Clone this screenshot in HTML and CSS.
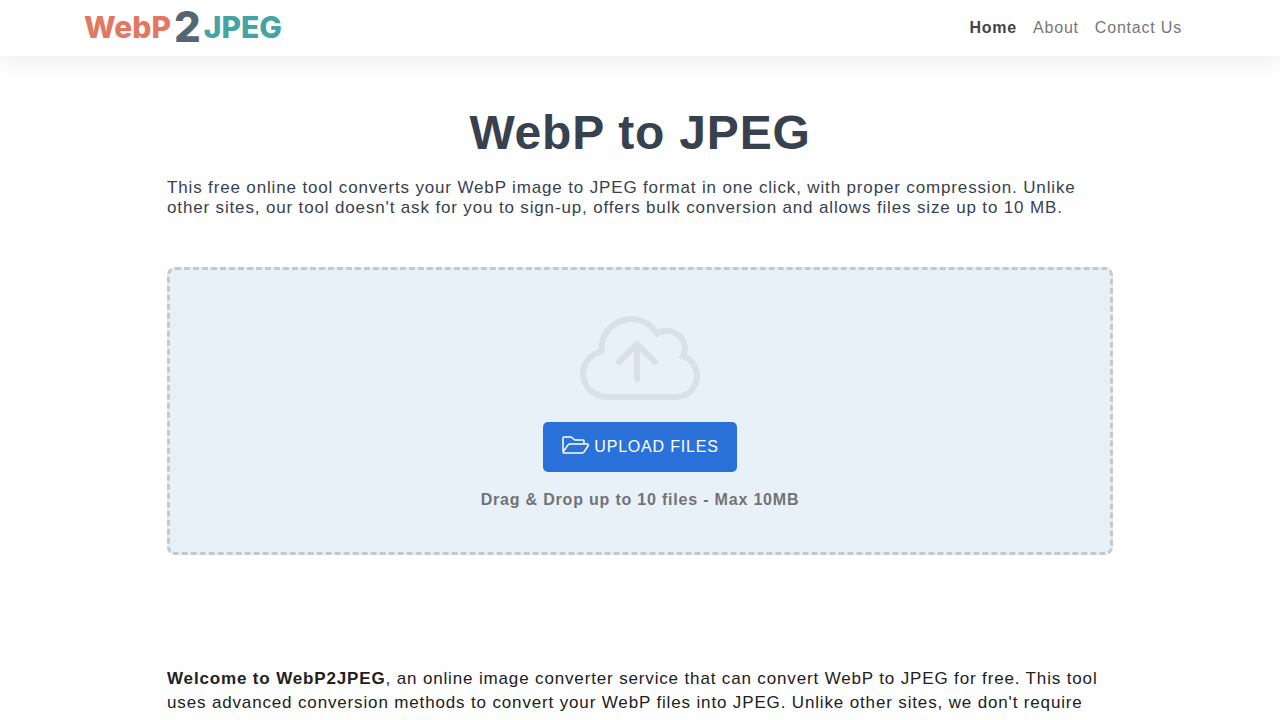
FILE: index.html
```
<!DOCTYPE html>
<html lang="en">
<head>
    <meta charset="UTF-8">
    <meta name="viewport" content="width=device-width, initial-scale=1.0">
    <title>WebP to JPEG</title>
    <link rel="stylesheet" href="styles.css">
</head>
<body>
    <header class="navbar">
        <div class="nav-container">
            <a class="logo" href="#"><span class="logo-webp">WebP</span><span class="logo-two">2</span><span class="logo-jpeg">JPEG</span></a>
            <nav class="nav-links">
                <a class="active" href="#">Home</a>
                <a href="#">About</a>
                <a href="#">Contact Us</a>
            </nav>
        </div>
    </header>

    <main class="container">
        <h1>WebP to JPEG</h1>
        <p class="lead">This free online tool converts your WebP image to JPEG format in one click, with proper compression. Unlike other sites, our tool doesn't ask for you to sign-up, offers bulk conversion and allows files size up to 10 MB.</p>

        <div class="dropzone">
            <svg class="cloud" viewBox="0 0 120 84" aria-hidden="true">
                <path d="M27 81A24 24 0 0 1 3 57A24 23 0 0 1 21.500 35.500A30 30 0 0 1 77 17.500A18.500 18.500 0 0 1 105 33Q105 37 103 40A21.500 21.500 0 0 1 117 60A21 21 0 0 1 96 81Z"/>
                <path class="arrow" d="M57 63V28M39 46L57 28L75 46"/>
            </svg>
            <button type="button" class="upload">
                <svg class="folder" viewBox="0 0 27 18" aria-hidden="true">
                    <path d="M1 16V2Q1 1 2 1H9L13 4H21Q22 4 22 5V8M1 16L6 9Q7 8 8 8H25Q27 8 26 10L22 16Q21 17 20 17H2Q1 17 1 16"/>
                </svg>
                <span>UPLOAD FILES</span>
            </button>
            <p class="hint">Drag &amp; Drop up to 10 files - Max 10MB</p>
        </div>

        <p class="about"><strong>Welcome to WebP2JPEG</strong>, an online image converter service that can convert WebP to JPEG for free. This tool uses advanced conversion methods to convert your WebP files into JPEG. Unlike other sites, we don't require</p>
    </main>
</body>
</html>
```

FILE: styles.css
```
* {
    box-sizing: border-box;
}
body {
    margin: 0;
    font-family: "Liberation Sans", Arial, sans-serif;
    font-size: 16px;
    line-height: 24px;
    letter-spacing: 0.05em;
    color: #212121;
    background-color: #fefefe;
}
.navbar {
    background-color: #fff;
    box-shadow: 0 8px 16px rgba(0, 0, 0, 0.05);
}
.nav-container {
    display: flex;
    align-items: center;
    justify-content: space-between;
    max-width: 1112px;
    height: 56px;
    margin: 0 auto;
    padding: 0 14px 0 0;
}
.logo {
    display: flex;
    align-items: center;
    padding-bottom: 2px;
    font-family: Inter, sans-serif;
    font-size: 30px;
    font-weight: 800;
    line-height: 52px;
    letter-spacing: 0;
    text-decoration: none;
}
.logo-webp {
    color: #e37862;
}
.logo-two {
    margin: 0 3px;
    font-size: 42px;
    color: #546770;
}
.logo-jpeg {
    color: #45a3a3;
}
.nav-links {
    display: flex;
    gap: 16px;
}
.nav-links a {
    color: #777;
    text-decoration: none;
}
.nav-links .active {
    font-weight: bold;
    color: #444;
}
.container {
    max-width: 978px;
    margin: 0 auto;
    padding: 48px 16px 0;
}
h1 {
    margin: 0 0 16px;
    font-size: 48px;
    line-height: 58px;
    text-align: center;
    color: #38424f;
}
.lead,
.about {
    margin: 0;
    font-size: 17px;
    letter-spacing: 0.05em;
}
.lead {
    line-height: 20px;
    color: #38424f;
}
.dropzone {
    display: flex;
    flex-direction: column;
    align-items: center;
    margin: 49px 0 112px;
    padding: 46px 16px 40px;
    border: 3px dashed #c8c8c8;
    border-radius: 8px;
    background-color: #e9f1f8;
}
.cloud {
    width: 120px;
    height: 84px;
    fill: none;
    stroke: #d9e0e7;
    stroke-width: 6;
}
.arrow {
    stroke-linecap: round;
    stroke-linejoin: round;
}
.upload {
    display: flex;
    align-items: center;
    gap: 5px;
    height: 50px;
    margin: 22px 0 16px;
    padding: 0 18px 0 19px;
    border: 0;
    border-radius: 5px;
    background-color: #2a72da;
    color: #fff;
    font-family: inherit;
    font-size: 16px;
    letter-spacing: inherit;
    cursor: pointer;
}
.upload:hover {
    background-color: #2163c2;
}
.folder {
    width: 27px;
    height: 18px;
    margin-bottom: 4px;
    fill: none;
    stroke: #fff;
    stroke-width: 1.5;
}
.hint {
    margin: 0;
    font-weight: bold;
    color: #717477;
}
```
